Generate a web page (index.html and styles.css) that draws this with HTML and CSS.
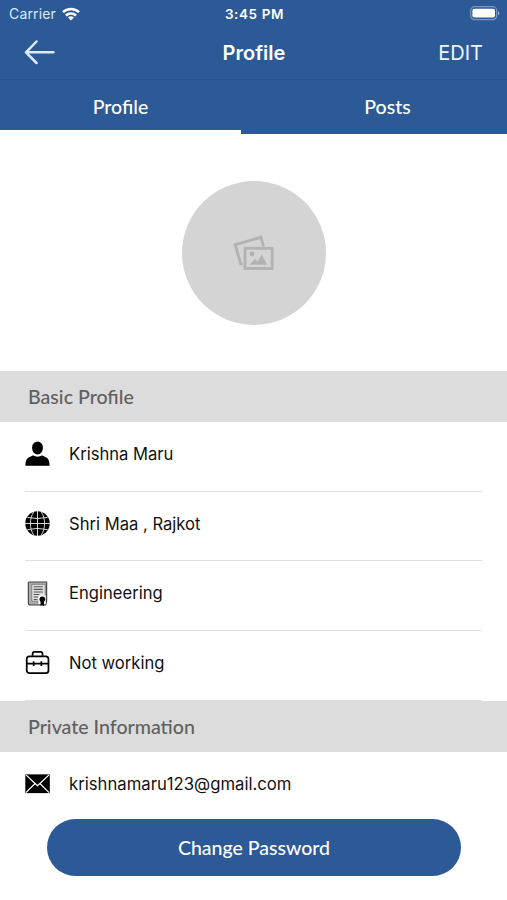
FILE: index.html
```html
<!DOCTYPE html>
<html lang="en">

<head>
    <meta charset="utf-8">
    <meta name="viewport" content="width=device-width, initial-scale=1.0">
    <title>Profile</title>
    <link rel="stylesheet" href="styles.css">
</head>

<body>
    <header>
        <div class="status-bar">
            <div class="carrier">
                <span>Carrier</span>
                <svg width="18" height="14" viewBox="0 0 18 14" fill="none" stroke="#fff" stroke-width="2.5">
                    <path d="M1 5.2a11.4 11.4 0 0 1 16 0" />
                    <path d="M3.9 8.5a7.3 7.3 0 0 1 10.2 0" />
                    <path d="M9 13.6l-3-3a4.3 4.3 0 0 1 6 0z" fill="#fff" stroke="none" />
                </svg>
            </div>
            <span class="time">3:45 PM</span>
            <svg class="battery" width="30" height="15" viewBox="0 0 30 15">
                <rect x=".7" y=".7" width="26" height="13" rx="4" fill="none" stroke="#7898c2" stroke-width="1.2" />
                <rect x="2.4" y="2.8" width="22.6" height="8.8" rx="2" fill="#fff" />
                <path d="M28 5c2 .8 2 3.600 0 4.400z" fill="#8ca9cc" />
            </svg>
        </div>
        <nav class="nav-bar">
            <svg class="back" width="32" height="26" viewBox="0 0 32 26" fill="none" stroke="#dceafb" stroke-width="2.500" stroke-linecap="round" stroke-linejoin="round">
                <path d="M12.500 1.500L2 12.300l10.500 10.700M2 12.300h27.500" />
            </svg>
            <h1>Profile</h1>
            <span class="edit">EDIT</span>
        </nav>
        <div class="tabs">
            <div class="tab active">Profile</div>
            <div class="tab">Posts</div>
        </div>
    </header>

    <main>
        <div class="photo">
            <div class="avatar">
                <svg width="42" height="36" viewBox="0 0 42 36" fill="none" stroke="#b2b2b2" stroke-width="2.8">
                    <path d="M9.500 28.500L7.700 28.800 2.200 9.700 28 2.300 30.500 11.500" />
                    <rect x="12" y="13.300" width="27.200" height="20.200" />
                    <circle cx="19" cy="19" r="2.400" fill="#b2b2b2" stroke="none" />
                    <path d="M16.500 29.700l5.500-5.700 2.500 2.300 4.300-6.800 5.200 10.200z" fill="#b2b2b2" stroke="none" />
                </svg>
            </div>
        </div>

        <h2>Basic Profile</h2>
        <ul class="list">
            <li>
                <svg class="icon" viewBox="0 0 26 26">
                    <path d="M13 .8c3.700 0 5.600 2.600 5.600 6.200 0 3.900-2.400 7-5.600 7s-5.600-3.100-5.600-7C7.400 3.400 9.300.8 13 .8z" />
                    <path d="M.4 25.700c0-5 1.400-7.700 3.900-8.800l4.200-2c2.700 2 6.300 2 9 0l4.200 2c2.500 1.100 3.900 3.800 3.900 8.800z" />
                </svg>
                <span>Krishna Maru</span>
            </li>
            <li>
                <svg class="icon" viewBox="0 0 26 26">
                    <circle cx="13" cy="13" r="12.700" />
                    <path d="M13 0v26M0 13h26M2.500 6.600q10.500 2.600 21 0M2.500 19.400q10.500-2.600 21 0M9 1C4.500 8 4.500 18 9 25M17 1c4.500 7 4.500 17 0 24" fill="none" stroke="#ddd" stroke-width="1" />
                </svg>
                <span>Shri Maa , Rajkot</span>
            </li>
            <li>
                <svg class="icon" viewBox="0 0 26 26">
                    <path d="M4.500 1h18v20l-1 4H5.500q-2 0-2-2V2q0-1 1-1z" fill="#aaa" stroke="#444" stroke-width="1.200" />
                    <path d="M7 3.500h14V21H7z" fill="#ddd" stroke="#777" stroke-width=".8" />
                    <path d="M9 6h9.500M9 8.700h9.500M9 11.400h9.500M9 14h6M9 16.700h5M9 19.200h4" stroke="#555" stroke-width="1.100" />
                    <rect x="14" y="15" width="7.500" height="9" fill="#fff" />
                    <circle cx="18" cy="19" r="2.900" />
                    <path d="M16.200 19.500h3.600V26l-1.800-1-1.800 1z" />
                </svg>
                <span>Engineering</span>
            </li>
            <li>
                <svg class="icon" viewBox="0 0 26 26" fill="none" stroke="#000" stroke-width="1.800">
                    <rect x="1.800" y="6.600" width="22.600" height="17.400" rx="2.800" />
                    <path d="M7.900 6V4.200q0-2.200 2-2.200h6.300q2 0 2 2.200V6M2 14.200h22.400M9 11.700v5M17 11.700v5" />
                </svg>
                <span>Not working</span>
            </li>
        </ul>

        <h2>Private Information</h2>
        <ul class="list last">
            <li>
                <svg class="icon" viewBox="0 0 26 26">
                    <rect x=".3" y="3.500" width="25.500" height="19.500" />
                    <path d="M1 4l9.500 9L1 22.500M25 4l-9.500 9L25 22.500M10.500 13l2.500 2.200 2.500-2.200" fill="none" stroke="#fff" stroke-width="1.300" />
                </svg>
                <span>krishnamaru123@gmail.com</span>
            </li>
        </ul>

        <button type="button">Change Password</button>
    </main>
</body>

</html>
```
FILE: styles.css
```css
* {
    box-sizing: border-box;
}

body {
    margin: 0;
    background: #fff;
    color: #111;
    font-family: "Inter", "Liberation Sans", sans-serif;
}

/* Header */
header {
    height: 134px;
    background: #2c5a96;
    color: #fff;
}

.status-bar {
    display: grid;
    grid-template-columns: 1fr auto 1fr;
    align-items: center;
    height: 27px;
    padding: 0 7px 0 9px;
    font-size: 14px;
}

.carrier {
    display: flex;
    align-items: center;
    gap: 6px;
    color: #dce9f8;
    letter-spacing: 0.15px;
}

.time {
    font-size: 13.500px;
    font-weight: 600;
    letter-spacing: 0.600px;
}

.battery {
    justify-self: end;
}

.nav-bar {
    display: grid;
    grid-template-columns: 1fr auto 1fr;
    align-items: center;
    height: 53px;
    padding: 0 24px 0 24px;
    border-bottom: 1px solid #26518b;
}

.nav-bar h1 {
    margin: 0;
    padding-left: 1px;
    font-size: 20px;
    font-weight: 600;
}

.edit {
    justify-self: end;
    font-size: 20px;
    color: #edf5ff;
}

.tabs {
    display: flex;
    height: 54px;
    font-family: "Lato", sans-serif;
    font-size: 19.500px;
    font-weight: 500;
}

.tab {
    flex: 1 1 266px;
    height: 54px;
    line-height: 53px;
    padding-left: 27px;
    text-align: center;
}

.tab.active {
    flex: 0 0 241px;
    padding-left: 0;
    border-bottom: 4px solid #fff;
}

/* Photo */
.photo {
    display: flex;
    justify-content: center;
    align-items: center;
    height: 237px;
    padding-left: 1px;
}

.avatar {
    display: flex;
    justify-content: center;
    align-items: center;
    width: 144px;
    height: 144px;
    border-radius: 50%;
    background: #d4d4d4;
}

/* Sections */
h2 {
    height: 51px;
    margin: 0;
    padding-left: 28px;
    background: #dcdcdc;
    color: #606060;
    font-family: "Lato", sans-serif;
    font-size: 19.600px;
    font-weight: 500;
    line-height: 51px;
}

.list {
    margin: 0;
    padding: 0 25px;
    list-style: none;
}

.list li {
    display: flex;
    align-items: center;
    gap: 19px;
    height: 69.700px;
    padding-bottom: 5px;
    border-bottom: 1px solid #e0e0e0;
    font-size: 16.600px;
}

.list.last li {
    height: 67px;
    padding-bottom: 3px;
    border-bottom: none;
    font-size: 16.700px;
}

.icon {
    width: 25px;
    height: 25px;
    flex: none;
}

button {
    display: block;
    width: 414px;
    height: 57px;
    margin: 0 0 0 47px;
    padding: 0;
    border: none;
    border-radius: 29px;
    background: #2c5a96;
    color: #fff;
    font-family: "Lato", sans-serif;
    font-size: 19.500px;
    font-weight: 500;
}
```
